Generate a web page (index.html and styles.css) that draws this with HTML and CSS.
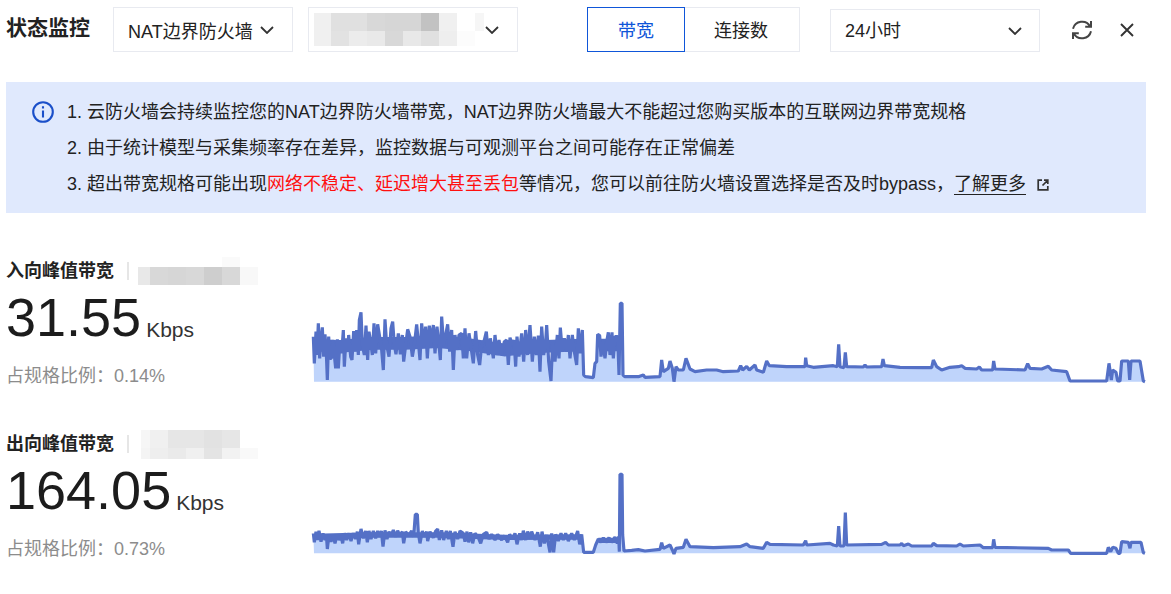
FILE: index.html
```html
<!DOCTYPE html>
<html lang="zh-CN">
<head>
<meta charset="utf-8">
<title>状态监控</title>
<link rel="stylesheet" href="styles.css">
</head>
<body>
<header class="toolbar">
  <h1 class="title">状态监控</h1>
  <div class="select select-type"><span>NAT边界防火墙</span>
    <svg class="chevron" viewBox="0 0 14 8"><path d="M1 1l6 6 6-6"/></svg>
  </div>
  <div class="select select-instance">
    <div class="mosaic mosaic-instance">
      <i class="g240"></i><i class="g224"></i><i class="g224"></i><i class="g216"></i><i class="g214"></i><i class="g214"></i><i class="g194"></i><i class="g240"></i><i class="g255"></i><i class="g246"></i>
      <i class="g240"></i><i class="g226"></i><i class="g236"></i><i class="g233"></i><i class="g216"></i><i class="g232"></i><i class="g224"></i><i class="g238"></i><i class="g252"></i><i class="g255"></i>
    </div>
    <svg class="chevron" viewBox="0 0 14 8"><path d="M1 1l6 6 6-6"/></svg>
  </div>
  <div class="segment">
    <span class="segment-item is-active">带宽</span>
    <span class="segment-item">连接数</span>
  </div>
  <div class="select select-range"><span>24小时</span>
    <svg class="chevron" viewBox="0 0 14 8"><path d="M1 1l6 6 6-6"/></svg>
  </div>
  <svg class="icon-refresh" viewBox="0 0 24 24"><path d="M20.2 8.5A9.3 9.3 0 0 0 3 10.8M21 3v5.8h-5.8M3.8 15.5A9.3 9.3 0 0 0 21 13.2M3 21v-5.8h5.8"/></svg>
  <svg class="icon-close" viewBox="0 0 14 14"><path d="M1 1l12 12M13 1L1 13"/></svg>
</header>

<section class="notice">
  <svg class="notice-icon" viewBox="0 0 22 22"><circle cx="11" cy="11" r="9.8"/><path d="M11 9.5v7M11 5.2v2.3"/></svg>
  <div class="notice-body">
    <p>1. 云防火墙会持续监控您的NAT边界防火墙带宽，NAT边界防火墙最大不能超过您购买版本的互联网边界带宽规格</p>
    <p>2. 由于统计模型与采集频率存在差异，监控数据与可观测平台之间可能存在正常偏差</p>
    <p>3. 超出带宽规格可能出现<span class="danger">网络不稳定、延迟增大甚至丢包</span>等情况，您可以前往防火墙设置选择是否及时bypass，<a class="more" href="#">了解更多</a><svg class="icon-external" viewBox="0 0 12 12"><path d="M5 1.2H1.2v9.6h9.6V7M7 1.2h3.8V5M10.5 1.5L5.5 6.5"/></svg></p>
  </div>
</section>

<section class="metric">
  <div class="metric-info">
    <div class="metric-head">
      <h2 class="metric-title">入向峰值带宽</h2>
      <span class="divider"></span>
      <div class="mosaic mosaic-in">
        <i></i><i></i><i></i><i></i><i></i><i class="g250"></i><i></i>
        <i class="g232"></i><i class="g216"></i><i class="g214"></i><i class="g216"></i><i class="g206"></i><i class="g216"></i><i class="g248"></i>
      </div>
    </div>
    <div class="metric-value"><span class="number">31.55</span><span class="unit">Kbps</span></div>
    <div class="metric-ratio">占规格比例：0.14%</div>
  </div>
  <svg class="chart" viewBox="0 0 2535 285">
    <path class="area" d="M27,260L25,125 28,205 33,110 36,180 40,85 44,190 48,130 52,97 56,185 60,118 64,175 67,255 71,125 75,190 79,190 84,135 88,180 92,220 97,133 100,220 105,135 110,175 115,105 118,215 123,130 128,170 131,120 137,185 141,195 146,108 150,170 155,105 160,180 163,75 168,52 172,150 178,180 183,92 188,195 192,110 197,140 202,180 207,85 212,175 218,88 224,125 230,165 235,225 240,73 245,150 252,185 258,100 263,80 268,150 273,178 280,115 286,178 292,120 296,200 302,150 308,103 315,125 322,185 328,150 335,88 340,140 345,195 350,85 356,150 362,95 367,190 373,92 380,140 385,90 390,175 396,95 402,150 406,195 410,65 416,150 422,120 428,88 434,170 440,105 445,225 450,120 456,165 462,120 470,115 475,190 480,100 485,190 492,115 500,170 505,205 512,108 518,180 524,210 530,150 538,135 544,110 550,180 556,130 565,190 570,120 576,180 582,135 590,180 598,140 605,135 610,210 615,128 622,150 627,135 632,215 636,125 642,185 650,115 656,200 662,105 668,180 675,90 682,200 688,125 694,180 700,122 705,230 710,95 716,180 722,140 725,90 731,200 738,258 743,140 750,200 757,120 762,190 766,98 772,170 778,130 785,170 790,120 795,190 802,120 808,170 815,210 820,100 826,175 832,105 836,240 842,245 865,248 870,205 875,200 878,118 884,122 888,185 893,140 900,190 906,135 910,112 915,180 921,112 925,190 930,125 938,125 942,240 946,25 951,25 954,240 960,245 1000,245 1015,240 1020,247 1065,245 1070,195 1075,230 1090,220 1095,198 1102,220 1107,260 1113,215 1120,225 1135,225 1143,190 1155,222 1170,230 1205,225 1235,225 1255,230 1300,228 1307,212 1313,225 1325,214 1333,225 1350,210 1355,225 1375,232 1385,198 1393,212 1445,215 1500,215 1502,188 1505,212 1525,217 1585,212 1597,215 1601,148 1605,215 1617,218 1621,172 1625,215 1675,216 1680,210 1685,216 1730,215 1734,192 1738,212 1785,217 1855,218 1880,218 1885,195 1895,215 1910,225 1935,217 1960,215 1970,212 1980,220 2015,222 2023,216 2030,225 2063,225 2066,198 2070,222 2160,225 2168,206 2175,220 2210,222 2230,214 2240,225 2285,230 2295,258 2405,258 2412,205 2419,255 2423,225 2433,232 2438,258 2445,258 2450,198 2470,198 2474,255 2478,198 2505,198 2515,258 2520,260Z"/>
    <path class="band band-in" d="M28,150 100,155 200,145 300,145 400,140 500,150 600,165 700,155 830,150M888,150 940,150"/>
    <path class="line" d="M25,125 28,205 33,110 36,180 40,85 44,190 48,130 52,97 56,185 60,118 64,175 67,255 71,125 75,190 79,190 84,135 88,180 92,220 97,133 100,220 105,135 110,175 115,105 118,215 123,130 128,170 131,120 137,185 141,195 146,108 150,170 155,105 160,180 163,75 168,52 172,150 178,180 183,92 188,195 192,110 197,140 202,180 207,85 212,175 218,88 224,125 230,165 235,225 240,73 245,150 252,185 258,100 263,80 268,150 273,178 280,115 286,178 292,120 296,200 302,150 308,103 315,125 322,185 328,150 335,88 340,140 345,195 350,85 356,150 362,95 367,190 373,92 380,140 385,90 390,175 396,95 402,150 406,195 410,65 416,150 422,120 428,88 434,170 440,105 445,225 450,120 456,165 462,120 470,115 475,190 480,100 485,190 492,115 500,170 505,205 512,108 518,180 524,210 530,150 538,135 544,110 550,180 556,130 565,190 570,120 576,180 582,135 590,180 598,140 605,135 610,210 615,128 622,150 627,135 632,215 636,125 642,185 650,115 656,200 662,105 668,180 675,90 682,200 688,125 694,180 700,122 705,230 710,95 716,180 722,140 725,90 731,200 738,258 743,140 750,200 757,120 762,190 766,98 772,170 778,130 785,170 790,120 795,190 802,120 808,170 815,210 820,100 826,175 832,105 836,240 842,245 865,248 870,205 875,200 878,118 884,122 888,185 893,140 900,190 906,135 910,112 915,180 921,112 925,190 930,125 938,125 942,240 946,25 951,25 954,240 960,245 1000,245 1015,240 1020,247 1065,245 1070,195 1075,230 1090,220 1095,198 1102,220 1107,260 1113,215 1120,225 1135,225 1143,190 1155,222 1170,230 1205,225 1235,225 1255,230 1300,228 1307,212 1313,225 1325,214 1333,225 1350,210 1355,225 1375,232 1385,198 1393,212 1445,215 1500,215 1502,188 1505,212 1525,217 1585,212 1597,215 1601,148 1605,215 1617,218 1621,172 1625,215 1675,216 1680,210 1685,216 1730,215 1734,192 1738,212 1785,217 1855,218 1880,218 1885,195 1895,215 1910,225 1935,217 1960,215 1970,212 1980,220 2015,222 2023,216 2030,225 2063,225 2066,198 2070,222 2160,225 2168,206 2175,220 2210,222 2230,214 2240,225 2285,230 2295,258 2405,258 2412,205 2419,255 2423,225 2433,232 2438,258 2445,258 2450,198 2470,198 2474,255 2478,198 2505,198 2515,258 2520,260"/>
  </svg>
</section>

<section class="metric">
  <div class="metric-info">
    <div class="metric-head">
      <h2 class="metric-title">出向峰值带宽</h2>
      <span class="divider"></span>
      <div class="mosaic mosaic-out">
        <i class="g246"></i><i class="g240"></i><i class="g230"></i><i class="g230"></i><i class="g226"></i><i class="g230"></i><i></i>
        <i class="g244"></i><i class="g238"></i><i class="g234"></i><i class="g240"></i><i class="g228"></i><i class="g242"></i><i class="g249"></i>
      </div>
    </div>
    <div class="metric-value"><span class="number">164.05</span><span class="unit">Kbps</span></div>
    <div class="metric-ratio">占规格比例：0.73%</div>
  </div>
  <svg class="chart" viewBox="0 9 2535 285">
    <path class="area" d="M27,265L25,205 28,232 33,200 38,225 42,197 48,230 54,205 60,225 64,208 67,252 72,210 78,230 85,212 90,235 96,210 102,225 108,212 113,235 118,205 125,225 132,205 138,228 145,205 152,222 157,200 161,238 168,192 175,220 182,198 187,232 192,198 198,222 205,198 212,220 218,198 224,215 229,198 234,245 240,196 246,222 252,200 258,212 265,195 272,215 278,197 285,212 292,200 296,235 302,200 310,212 320,198 326,215 331,148 337,148 340,205 345,235 352,198 358,215 365,200 368,228 375,200 385,218 392,198 398,192 403,225 410,196 416,225 424,198 430,222 436,198 444,245 450,200 458,222 465,198 475,205 480,230 486,200 491,232 497,202 503,235 510,205 520,218 527,235 535,208 545,202 552,222 560,208 570,225 578,208 590,225 598,212 608,232 614,208 622,222 630,205 636,238 644,205 650,225 655,197 662,225 668,200 675,218 680,200 690,225 698,202 706,245 711,200 718,235 725,210 735,262 740,205 746,262 752,208 760,228 768,205 775,225 782,205 790,228 800,205 808,225 818,198 824,238 830,208 836,262 845,262 865,262 872,240 880,222 888,232 895,218 903,232 912,218 920,232 930,216 937,235 941,215 943,260 945,28 951,28 953,210 957,258 980,256 1000,254 1020,258 1065,253 1070,233 1075,250 1095,240 1102,255 1107,267 1113,250 1135,247 1143,223 1155,245 1225,248 1305,245 1325,237 1335,245 1375,250 1385,232 1395,238 1495,240 1502,227 1505,240 1575,235 1585,240 1597,243 1601,183 1605,243 1617,243 1621,143 1625,240 1730,238 1742,232 1750,240 1785,240 1790,235 1795,242 1810,237 1820,243 1880,243 1885,235 1895,242 1955,243 1965,237 1975,243 2025,240 2035,248 2063,248 2066,223 2070,247 2230,250 2240,255 2290,255 2297,265 2405,265 2410,247 2417,260 2423,247 2433,250 2440,265 2445,265 2450,230 2470,232 2475,250 2478,232 2508,232 2515,263 2520,265Z"/>
    <path class="band band-out" d="M28,214 200,210 400,210 600,217 830,216M880,226 940,226"/>
    <path class="line" d="M25,205 28,232 33,200 38,225 42,197 48,230 54,205 60,225 64,208 67,252 72,210 78,230 85,212 90,235 96,210 102,225 108,212 113,235 118,205 125,225 132,205 138,228 145,205 152,222 157,200 161,238 168,192 175,220 182,198 187,232 192,198 198,222 205,198 212,220 218,198 224,215 229,198 234,245 240,196 246,222 252,200 258,212 265,195 272,215 278,197 285,212 292,200 296,235 302,200 310,212 320,198 326,215 331,148 337,148 340,205 345,235 352,198 358,215 365,200 368,228 375,200 385,218 392,198 398,192 403,225 410,196 416,225 424,198 430,222 436,198 444,245 450,200 458,222 465,198 475,205 480,230 486,200 491,232 497,202 503,235 510,205 520,218 527,235 535,208 545,202 552,222 560,208 570,225 578,208 590,225 598,212 608,232 614,208 622,222 630,205 636,238 644,205 650,225 655,197 662,225 668,200 675,218 680,200 690,225 698,202 706,245 711,200 718,235 725,210 735,262 740,205 746,262 752,208 760,228 768,205 775,225 782,205 790,228 800,205 808,225 818,198 824,238 830,208 836,262 845,262 865,262 872,240 880,222 888,232 895,218 903,232 912,218 920,232 930,216 937,235 941,215 943,260 945,28 951,28 953,210 957,258 980,256 1000,254 1020,258 1065,253 1070,233 1075,250 1095,240 1102,255 1107,267 1113,250 1135,247 1143,223 1155,245 1225,248 1305,245 1325,237 1335,245 1375,250 1385,232 1395,238 1495,240 1502,227 1505,240 1575,235 1585,240 1597,243 1601,183 1605,243 1617,243 1621,143 1625,240 1730,238 1742,232 1750,240 1785,240 1790,235 1795,242 1810,237 1820,243 1880,243 1885,235 1895,242 1955,243 1965,237 1975,243 2025,240 2035,248 2063,248 2066,223 2070,247 2230,250 2240,255 2290,255 2297,265 2405,265 2410,247 2417,260 2423,247 2433,250 2440,265 2445,265 2450,230 2470,232 2475,250 2478,232 2508,232 2515,263 2520,265"/>
  </svg>
</section>
</body>
</html>
```
FILE: styles.css
```css
* { box-sizing: border-box; }
html, body { margin: 0; padding: 0; }
body {
  width: 1171px;
  height: 594px;
  overflow: hidden;
  background: #fff;
  color: #222;
  font-family: "Liberation Sans", "Noto Sans CJK SC", sans-serif;
  font-size: 18px;
  padding: 7px 25px 0 6px;
}
.toolbar { display: flex; align-items: center; height: 45px; }
.title { margin: 0 23px 0 0; padding-bottom: 4px; font-size: 21px; font-weight: 700; line-height: 41px; width: 84px; white-space: nowrap; }
.select {
  display: flex; align-items: center; justify-content: space-between;
  height: 45px; border: 1.5px solid #e8eaf0; background: #fff; white-space: nowrap;
}
.select-type { width: 180px; padding: 0 18px 0 14px; margin-right: 15px; }
.select-instance { width: 210px; padding: 0 18px 0 5px; margin-right: 69px; }
.select-range { width: 210px; height: 43px; margin: 2px 29px 0 30px; padding: 0 17px 0 14px; }
.select-range span { padding-bottom: 4px; }
.chevron { width: 14px; height: 8px; fill: none; stroke: #333; stroke-width: 1.8; flex: none; }
.segment { display: flex; height: 45px; }
.segment-item {
  display: flex; align-items: center; justify-content: center;
  height: 45px; border: 1.5px solid #e8eaf0; border-left: 0; width: 115px;
  padding: 0 2px 2px 0;
}
.segment-item.is-active { width: 98px; border: 1.5px solid #0f56d9; color: #0f56d9; padding: 0 0 2px; }
.icon-refresh { width: 24px; height: 24px; fill: none; stroke: #444; stroke-width: 2; margin: 0 26px 0 1px; flex: none; }
.icon-close { width: 14px; height: 14px; fill: none; stroke: #333; stroke-width: 1.9; flex: none; }

.notice {
  display: flex; margin-top: 30px; height: 131px; width: 1140px;
  padding: 12px 0 0 26px; background: #e0e9fd;
}
.notice-icon { width: 22px; height: 22px; margin: 7px 13px 0 0; fill: none; stroke: #1a4fc9; stroke-width: 2.1; flex: none; }
.notice-body p { margin: 0; line-height: 36px; white-space: nowrap; }
.danger { color: #ff0f0f; }
.more { color: #222; text-decoration: none; border-bottom: 1.5px solid #222; }
.icon-external { width: 12px; height: 12px; margin-left: 11px; fill: none; stroke: #333; stroke-width: 1.7; vertical-align: -1px; }

.metric { display: flex; height: 173px; }
.notice + .metric { margin-top: 42px; }
.metric-info { width: 299px; flex: none; padding-top: 1px; }
.metric-head { display: flex; align-items: center; height: 30px; }
.metric-title { margin: 0; font-size: 18px; font-weight: 700; line-height: 30px; white-space: nowrap; }
.divider { width: 2px; height: 18px; background: #e6e6e6; margin-left: 13px; }
.mosaic { display: grid; flex: none; }
.mosaic-instance { grid-template-columns: 17px repeat(8, 18px) 9px; grid-template-rows: 18px 15px; }
.mosaic-in { grid-template-columns: 12px repeat(6, 18px); grid-template-rows: 10px 18px; margin-left: 9px; }
.mosaic-out { grid-template-columns: 9px repeat(6, 18px); grid-template-rows: 18px 11px; margin-left: 12px; }
.g194 { background: #c2c2c2; } .g206 { background: #cecece; } .g214 { background: #d6d6d6; }
.g216 { background: #d8d8d8; } .g224 { background: #e0e0e0; } .g226 { background: #e2e2e2; }
.g228 { background: #e4e4e4; } .g230 { background: #e6e6e6; } .g232 { background: #e8e8e8; }
.g233 { background: #e9e9e9; } .g234 { background: #eaeaea; } .g236 { background: #ececec; }
.g238 { background: #eeeeee; } .g240 { background: #f0f0f0; } .g242 { background: #f2f2f2; }
.g244 { background: #f4f4f4; } .g246 { background: #f6f6f6; } .g248 { background: #f8f8f8; }
.g249 { background: #f9f9f9; } .g250 { background: #fafafa; } .g252 { background: #fcfcfc; }
.g255 { background: #ffffff; }
.metric-value { display: flex; align-items: baseline; height: 62px; line-height: 62px; color: #1c1c1c; }
.number { font-size: 54px; }
.unit { font-size: 21px; margin-left: 5px; color: #333; position: relative; top: 1px; }
.metric-ratio { margin-top: 13px; line-height: 30px; color: #8c8c8c; }
.chart { width: 845px; height: 95px; margin-top: 40px; flex: none; }
.area { fill: #bfd4fb; }
.band { fill: none; stroke: #5470c6; }
.band-in { stroke-width: 38; }
.band-out { stroke-width: 16; }
.line { fill: none; stroke: #5470c6; stroke-width: 9.5; stroke-linejoin: bevel; }
```
